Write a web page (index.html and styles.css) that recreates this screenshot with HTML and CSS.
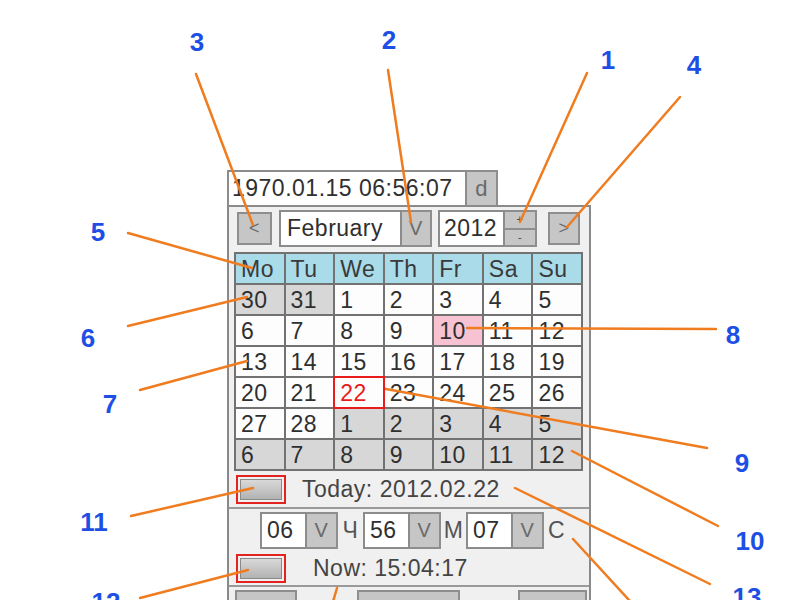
FILE: index.html
```html
<!DOCTYPE html>
<html lang="en">
<head>
    <meta charset="UTF-8">
    <meta name="viewport" content="width=device-width, initial-scale=1.0">
    <title>Date Time Picker - Legend</title>
    <link rel="stylesheet" href="styles.css">
</head>
<body>
<div class="stage">

    <div class="picker">
        <div class="display">
            <div class="display-field">1970.01.15 06:56:07</div>
            <div class="btn btn-d">d</div>
        </div>

        <div class="panel">
            <!-- month / year navigation -->
            <div class="nav">
                <div class="btn btn-arrow">&lt;</div>
                <div class="combo month">
                    <div class="field">February</div>
                    <div class="btn btn-drop">V</div>
                </div>
                <div class="combo year">
                    <div class="field">2012</div>
                    <div class="spin"><span>+</span><span>-</span></div>
                </div>
                <div class="btn btn-arrow btn-next">&gt;</div>
            </div>

            <div class="cal">
                <div class="cell head">Mo</div><div class="cell head">Tu</div><div class="cell head">We</div><div class="cell head">Th</div><div class="cell head">Fr</div><div class="cell head">Sa</div><div class="cell head">Su</div>
                <div class="cell other">30</div><div class="cell other">31</div><div class="cell">1</div><div class="cell">2</div><div class="cell">3</div><div class="cell">4</div><div class="cell">5</div>
                <div class="cell">6</div><div class="cell">7</div><div class="cell">8</div><div class="cell">9</div><div class="cell mark">10</div><div class="cell">11</div><div class="cell">12</div>
                <div class="cell">13</div><div class="cell">14</div><div class="cell">15</div><div class="cell">16</div><div class="cell">17</div><div class="cell">18</div><div class="cell">19</div>
                <div class="cell">20</div><div class="cell">21</div><div class="cell sel">22</div><div class="cell">23</div><div class="cell">24</div><div class="cell">25</div><div class="cell">26</div>
                <div class="cell">27</div><div class="cell">28</div><div class="cell other">1</div><div class="cell other">2</div><div class="cell other">3</div><div class="cell other">4</div><div class="cell other">5</div>
                <div class="cell other">6</div><div class="cell other">7</div><div class="cell other">8</div><div class="cell other">9</div><div class="cell other">10</div><div class="cell other">11</div><div class="cell other">12</div>
            </div>

            <div class="row row-today">
                <div class="mini"><span></span></div>
                <div class="row-text">Today: 2012.02.22</div>
            </div>

            <div class="row row-time">
                <div class="combo tbox"><div class="field">06</div><div class="btn btn-drop">V</div></div>
                <div class="unit">Ч</div>
                <div class="combo tbox"><div class="field">56</div><div class="btn btn-drop">V</div></div>
                <div class="unit">М</div>
                <div class="combo tbox"><div class="field">07</div><div class="btn btn-drop">V</div></div>
                <div class="unit">С</div>
            </div>

            <div class="row row-now">
                <div class="mini"><span></span></div>
                <div class="row-text now-text">Now: 15:04:17</div>
            </div>

            <div class="row row-bottom">
                <div class="btn bb1"></div>
                <div class="btn bb2"></div>
                <div class="btn bb3"></div>
            </div>
        </div>
    </div>

    <!-- callouts drawn over the widget -->
    <svg class="legend" width="800" height="600" viewBox="0 0 800 600">
        <g class="leader">
            <line x1="196" y1="74" x2="253" y2="225"/>
            <line x1="388" y1="70" x2="411" y2="222"/>
            <line x1="587" y1="73" x2="520" y2="222"/>
            <line x1="680" y1="97" x2="567" y2="227"/>
            <line x1="128" y1="233" x2="252" y2="268"/>
            <line x1="128" y1="326" x2="247" y2="297"/>
            <line x1="140" y1="390" x2="247" y2="361"/>
            <line x1="467" y1="328" x2="716" y2="329"/>
            <line x1="375" y1="387" x2="707" y2="448"/>
            <line x1="572" y1="451" x2="718" y2="526"/>
            <line x1="131" y1="516" x2="253" y2="488"/>
            <line x1="140" y1="598" x2="248" y2="570"/>
            <line x1="515" y1="488" x2="710" y2="584"/>
            <line x1="573" y1="539" x2="640" y2="612"/>
            <line x1="337" y1="588" x2="330" y2="612"/>
        </g>
        <g class="num">
            <text x="608" y="60">1</text>
            <text x="389" y="40">2</text>
            <text x="197" y="42">3</text>
            <text x="694" y="65">4</text>
            <text x="98" y="232">5</text>
            <text x="88" y="338">6</text>
            <text x="110" y="404">7</text>
            <text x="733" y="335">8</text>
            <text x="742" y="463">9</text>
            <text x="750" y="541">10</text>
            <text x="94" y="522">11</text>
            <text x="106" y="602">12</text>
            <text x="747" y="597">13</text>
        </g>
    </svg>

</div>
</body>
</html>
```

FILE: styles.css
```css
body {
    margin: 0;
    background-color: #ffffff;
    font-family: "Liberation Sans", Arial, sans-serif;
}
.stage {
    position: relative;
    width: 800px;
    height: 600px;
    overflow: hidden;
}
.picker {
    padding: 170px 0 0 227px;
    color: #2f2f2f;
    font-size: 23px;
    letter-spacing: 0.5px;
}
.display {
    display: flex;
    height: 35px;
}
.display-field {
    width: 240px;
    box-sizing: border-box;
    border: 2px solid #8c8c8c;
    border-bottom: none;
    background-color: #fff;
    line-height: 33px;
    padding-left: 3px;
    white-space: nowrap;
    overflow: hidden;
}
.btn {
    box-sizing: border-box;
    background-color: #c6c6c6;
    border: 2px solid #8e8e8e;
    color: #6a6a6a;
    font-size: 20px;
    display: flex;
    align-items: center;
    justify-content: center;
}
.btn-d {
    width: 31px;
    border-left: none;
    border-bottom: none;
    font-size: 22px;
}
.panel {
    width: 364px;
    box-sizing: border-box;
    border: 2px solid #8a8a8a;
    background-color: #f0f0f0;
}
.nav {
    display: flex;
    align-items: center;
    height: 40px;
    box-sizing: border-box;
    padding: 3px 0 0 8px;
}
.btn-arrow {
    width: 35px;
    height: 33px;
    font-size: 18px;
}
.btn-next {
    width: 32px;
    margin-left: 11px;
}
.combo {
    display: flex;
    height: 37px;
}
.combo .field {
    box-sizing: border-box;
    border: 2px solid #8c8c8c;
    background-color: #fff;
    line-height: 33px;
    padding-left: 6px;
}
.month {
    margin-left: 7px;
}
.month .field {
    width: 123px;
}
.btn-drop {
    width: 30px;
    border-left: none;
}
.year {
    margin-left: 6px;
}
.year .field {
    width: 67px;
    padding-left: 4px;
}
.spin {
    width: 32px;
    display: flex;
    flex-direction: column;
}
.spin span {
    flex: 1;
    box-sizing: border-box;
    background-color: #c6c6c6;
    border: 2px solid #8e8e8e;
    border-left: none;
    font-size: 11px;
    line-height: 14px;
    text-align: center;
    color: #444;
}
.spin span + span {
    border-top: none;
}
.cal {
    margin: 5px 0 0 5px;
    width: 349px;
    box-sizing: border-box;
    display: grid;
    grid-template-columns: repeat(7, 1fr);
    grid-auto-rows: 29px;
    gap: 2px;
    border: 2px solid #727272;
    background-color: #727272;
}
.cell {
    background-color: #fdfdfd;
    padding-left: 5px;
    line-height: 30px;
}
.head {
    background-color: #a9dbe9;
    color: #3a3a3a;
}
.other {
    background-color: #d7d7d7;
}
.mark {
    background-color: #f7c3d3;
}
.sel {
    position: relative;
    z-index: 1;
    outline: 2px solid #e91c1c;
    color: #e91c1c;
}
.row {
    display: flex;
    align-items: center;
    box-sizing: border-box;
}
.row-today {
    height: 38px;
    padding-left: 7px;
    border-bottom: 2px solid #9a9a9a;
}
.mini {
    width: 50px;
    height: 29px;
    box-sizing: border-box;
    border: 2px solid #e2231f;
    padding: 2px;
}
.mini span {
    display: block;
    height: 100%;
    box-sizing: border-box;
    border: 1px solid #8a8a8a;
    background: linear-gradient(#d9d9d9, #b2b2b2);
}
.row-text {
    margin-left: 16px;
    color: #444;
}
.row-time {
    height: 43px;
    padding-left: 31px;
}
.tbox .field {
    width: 47px;
    padding-left: 5px;
}
.tbox .btn-drop {
    width: 31px;
}
.unit {
    width: 25px;
    text-align: center;
    color: #555;
}
.row-now {
    height: 35px;
    padding-left: 7px;
    border-bottom: 2px solid #9a9a9a;
}
.now-text {
    margin-left: 27px;
}
.row-bottom {
    padding-top: 3px;
    align-items: flex-start;
}
.row-bottom .btn {
    height: 30px;
}
.bb1 {
    width: 62px;
    margin-left: 6px;
}
.bb2 {
    width: 103px;
    margin-left: 60px;
}
.bb3 {
    width: 69px;
    margin-left: 58px;
}
.legend {
    position: absolute;
    left: 0;
    top: 0;
    pointer-events: none;
}
.leader line {
    stroke: #f07c20;
    stroke-width: 2.5;
    stroke-linecap: round;
}
.num text {
    fill: #1d4fe4;
    font-family: "Liberation Sans", Arial, sans-serif;
    font-weight: bold;
    font-size: 26px;
    text-anchor: middle;
    dominant-baseline: central;
}
```
